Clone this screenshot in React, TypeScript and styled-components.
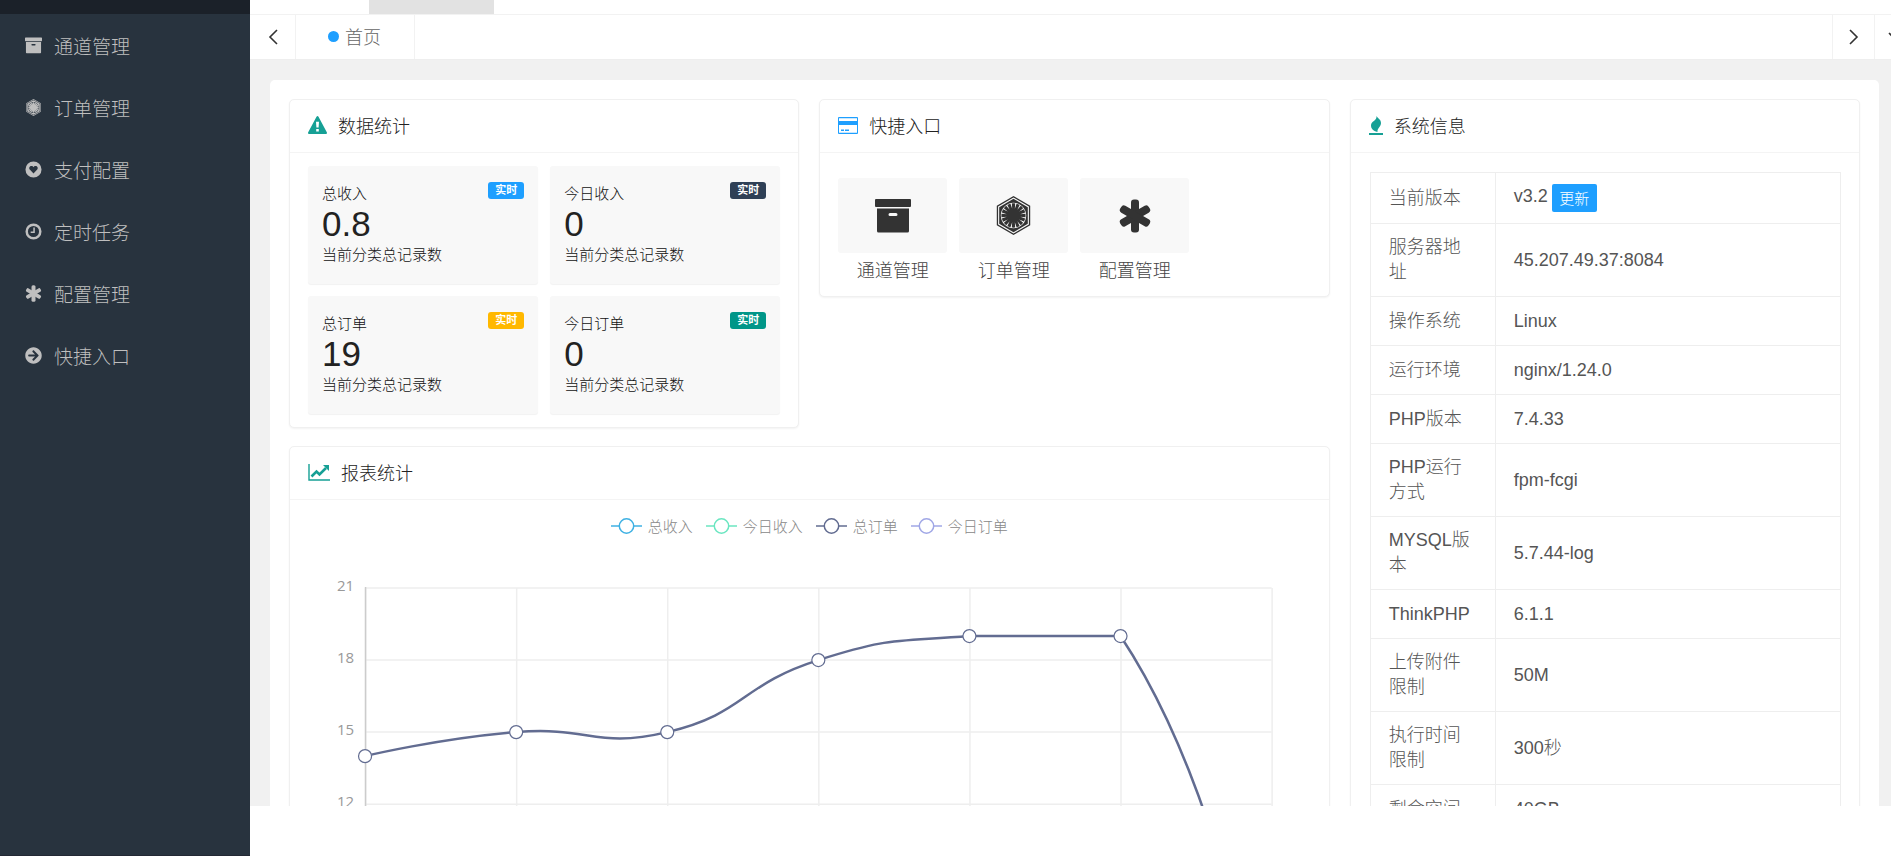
import React from 'react';
import styled, { createGlobalStyle } from 'styled-components';
import { FaArrowCircleRight, FaFirstOrder } from 'react-icons/fa';

const Global = createGlobalStyle`
  * { box-sizing: border-box; }
  body {
    margin: 0;
    background: #fff;
    color: #333;
    font-family: "Liberation Sans", "Noto Sans CJK SC", sans-serif;
    font-size: 18px;
  }
  a { color: inherit; text-decoration: none; }
  button { font: inherit; cursor: pointer; }
`;

const Shell = styled.div`
  display: flex;
  height: 100vh;
  overflow: hidden;
`;

const Sidebar = styled.aside`
  flex: 0 0 250px;
  background: #28333e;
  border-bottom: 1px solid #232834;
`;

const LogoBar = styled.div`
  height: 14px;
  background: #1b2129;
`;

const Menu = styled.nav`
  display: flex;
  flex-direction: column;
`;

const MenuLink = styled.a`
  display: flex;
  align-items: center;
  gap: 12px;
  height: 62px;
  padding-left: 25px;
  color: #bfbfbf;
  font-size: 19px;
  font-weight: 300;
  svg { width: 17px; height: 17px; }
`;

const Main = styled.div`
  flex: 1;
  min-width: 0;
  display: flex;
  flex-direction: column;
  padding-bottom: 50px;
`;

const TopBar = styled.header`
  flex: none;
  height: 15px;
  border-bottom: 1px solid #f2f2f2;
`;

const TopActive = styled.div`
  width: 125px;
  height: 14px;
  margin-left: 119px;
  background: #e2e2e2;
`;

const TabBar = styled.div`
  flex: none;
  display: flex;
  height: 45px;
  border-bottom: 1px solid #eee;
  overflow: hidden;
`;

const TabButton = styled.button<{ $side: 'left' | 'right' }>`
  flex: 0 0 ${(p) => (p.$side === 'left' ? 46 : 42)}px;
  display: flex;
  align-items: center;
  justify-content: center;
  padding: 0;
  background: #fff;
  border: 0 solid #f2f2f2;
  border-width: ${(p) => (p.$side === 'left' ? '0 1px 0 0' : '0 0 0 1px')};
  color: #333;
`;

const MoreButton = styled(TabButton)`
  flex-basis: 17px;
  min-width: 0;
  overflow: hidden;
  justify-content: flex-start;
  padding-left: 13px;
  svg { flex: none; }
`;

const TabCell = styled.div`
  border-right: 1px solid #f2f2f2;
  margin-right: auto;
`;

const Tab = styled.a`
  display: flex;
  align-items: center;
  gap: 6px;
  width: 118px;
  height: 42px;
  padding-left: 32px;
  color: #666;
  font-weight: 300;
`;

const Dot = styled.span`
  width: 11px;
  height: 11px;
  border-radius: 50%;
  background: #1e9fff;
`;

const Content = styled.main`
  flex: 1;
  min-height: 0;
  overflow: auto;
  scrollbar-width: none;
  padding: 20px 12px 0 20px;
  background: #f1f1f1;
`;

const Panel = styled.div`
  display: grid;
  grid-template-columns: repeat(3, minmax(0, 1fr));
  grid-template-rows: auto 1fr;
  gap: 18px 20px;
  align-items: start;
  padding: 19px;
  background: #fff;
  border-radius: 5px;
`;

const Card = styled.section<{ $area?: 'wide' | 'tall' }>`
  background: #fff;
  border: 1px solid #f0f0f0;
  border-radius: 5px;
  box-shadow: 0 1px 2px rgba(0, 0, 0, 0.05);
  ${(p) => p.$area === 'wide' && 'grid-column: 1 / 3; grid-row: 2;'}
  ${(p) => p.$area === 'tall' && 'grid-column: 3; grid-row: 1 / 3;'}
`;

const CardTitle = styled.h2`
  display: flex;
  align-items: center;
  gap: 11px;
  height: 53px;
  margin: 0;
  padding: 0 18px 2px;
  border-bottom: 1px solid #f4f4f4;
  font-size: 18px;
  font-weight: 300;
  color: #222;
`;

const Stats = styled.div`
  display: grid;
  grid-template-columns: 1fr 1fr;
  gap: 12px;
  padding: 13px 18px;
`;

const Stat = styled.div`
  height: 118px;
  padding: 16px 14px 0;
  background: #f8f8f8;
  border-radius: 3px;
  box-shadow: 0 1px 1px #f2f2f2;
  color: #111;
  font-size: 15px;
  font-weight: 300;
`;

const StatHead = styled.div`
  display: flex;
  justify-content: space-between;
  align-items: flex-start;
  line-height: 24px;
`;

const Badge = styled.span<{ $color: string }>`
  width: 36px;
  height: 17px;
  border-radius: 3px;
  background: ${(p) => p.$color};
  color: #fff;
  font-size: 11px;
  font-weight: 700;
  line-height: 16px;
  text-align: center;
`;

const StatValue = styled.div`
  color: #222;
  font-size: 35px;
  line-height: 36px;
`;

const StatNote = styled.div`
  line-height: 26px;
`;

const Shortcuts = styled.div`
  display: flex;
  gap: 12px;
  padding: 25px 18px 7px;
`;

const Shortcut = styled.a`
  width: 109px;
  color: #444;
  font-weight: 300;
  line-height: 36px;
  text-align: center;
`;

const Tile = styled.span`
  display: flex;
  align-items: center;
  justify-content: center;
  height: 75px;
  background: #f8f8f8;
  border-radius: 3px;
  color: #333;
`;

const InfoBody = styled.div`
  padding: 19px 18px 20px 19px;
`;

const InfoTable = styled.table`
  width: 100%;
  table-layout: fixed;
  border-collapse: collapse;
  color: #555;
  line-height: 25px;
  th, td {
    height: 49px;
    padding: 11px 18px;
    border: 1px solid #eee;
    font-weight: 300;
    text-align: left;
  }
  th { width: 125px; }
`;

const Version = styled.div`
  display: flex;
  gap: 4px;
`;

const UpdateButton = styled.button`
  width: 45px;
  height: 28px;
  padding: 0;
  border: 0;
  border-radius: 2px;
  background: #1e9fff;
  color: #fff;
  font-size: 15px;
`;

const Legend = styled.ul`
  display: flex;
  justify-content: center;
  gap: 13px;
  height: 51px;
  margin: 0;
  padding: 0;
  list-style: none;
  color: #888;
  font-size: 15px;
  font-weight: 300;
`;

const LegendItem = styled.li`
  display: flex;
  align-items: center;
  gap: 6px;
`;

const Plot = styled.svg`
  display: block;
  width: 100%;
  height: auto;
  text { fill: #999; font-family: "Open Sans", "Noto Sans", sans-serif; font-size: 15px; }
`;

const ArchiveIcon = ({ w, h }: { w: number; h: number }) => (
  <svg width={w} height={h} viewBox="0 0 36 34" fill="currentColor" aria-hidden>
    <rect width="36" height="8" rx="1" />
    <path
      fillRule="evenodd"
      d="M2 9.500h32v22.500a1.500 1.500 0 0 1-1.500 1.500h-29A1.500 1.500 0 0 1 2 32zM15 14a1.500 1.500 0 0 0 0 3h6a1.500 1.500 0 0 0 0-3z"
    />
  </svg>
);

const AsteriskIcon = ({ size }: { size: number }) => (
  <svg width={size} height={size} viewBox="0 0 34 34" fill="currentColor" aria-hidden>
    {[0, 60, 120].map((angle) => (
      <rect key={angle} x="13" y="0.500" width="8" height="33" rx="3" transform={`rotate(${angle} 17 17)`} />
    ))}
  </svg>
);

const HeartCircleIcon = () => (
  <svg viewBox="0 0 18 18" fill="currentColor" aria-hidden>
    <path
      fillRule="evenodd"
      d="M9 .5a8.500 8.500 0 1 0 0 17 8.500 8.500 0 0 0 0-17zM9 13.300L5.300 9.300C3.600 7.300 5 5.200 6.800 5.200c1 0 1.800.6 2.200 1.300.4-.7 1.200-1.300 2.200-1.300 1.800 0 3.200 2.100 1.500 4.100z"
    />
  </svg>
);

const ClockIcon = () => (
  <svg viewBox="0 0 18 18" fill="none" stroke="currentColor" aria-hidden>
    <circle cx="9" cy="9" r="7.200" strokeWidth="2.600" />
    <path d="M9.600 4.800v5H6" strokeWidth="1.600" />
  </svg>
);

const WarningIcon = () => (
  <svg width="19" height="18" viewBox="0 0 19 18" fill="#16a095" aria-hidden>
    <path
      fillRule="evenodd"
      d="M8.500.8a1.200 1.200 0 0 1 2 0l8.300 15.400a1.200 1.200 0 0 1-1 1.800H1.200a1.200 1.200 0 0 1-1-1.800zM8 5.800l.4 5.700h2.200l.4-5.700zM8.200 13v2.400h2.600V13z"
    />
  </svg>
);

const CardIcon = () => (
  <svg width="20" height="17" viewBox="0 0 20 17" fill="#1e9fff" aria-hidden>
    <path fillRule="evenodd" d="M1 0h18a1 1 0 0 1 1 1v15a1 1 0 0 1-1 1H1a1 1 0 0 1-1-1V1a1 1 0 0 1 1-1zm0 1.300V4h18V1.300zM1 8v7.800h18V8z" />
    <path d="M3 12.500h3V14H3zM7 12.500h4V14H7z" />
  </svg>
);

const ChartIcon = () => (
  <svg width="22" height="18" viewBox="0 0 22 18" fill="none" stroke="#16a095" aria-hidden>
    <path d="M1 1v16h21" strokeWidth="1.400" />
    <path d="M3.500 13.500l5-5 3 3 6.500-6.500" strokeWidth="2.600" />
    <path d="M15 2h6v6z" fill="#16a095" stroke="none" />
  </svg>
);

const FlameIcon = () => (
  <svg width="14" height="19" viewBox="0 0 14 19" fill="#16a095" aria-hidden>
    <path d="M7.500 0C8.500 2.500 12 3 12 7c0 4-4 5-3.500 9C4 15 2 12.500 2 9.500 2 5 8 5 7.500 0z" />
    <path d="M0 17h14v2H0z" />
  </svg>
);

const Chevron = ({ d, w = 10, h = 16 }: { d: string; w?: number; h?: number }) => (
  <svg width={w} height={h} viewBox={`0 0 ${w} ${h}`} fill="none" stroke="currentColor" strokeWidth="1.600" aria-hidden>
    <path d={d} />
  </svg>
);

const menu = [
  { label: '通道管理', icon: <ArchiveIcon w={17} h={17} /> },
  { label: '订单管理', icon: <FaFirstOrder /> },
  { label: '支付配置', icon: <HeartCircleIcon /> },
  { label: '定时任务', icon: <ClockIcon /> },
  { label: '配置管理', icon: <AsteriskIcon size={17} /> },
  { label: '快捷入口', icon: <FaArrowCircleRight /> },
];

const stats = [
  { label: '总收入', value: '0.8', color: '#1e9fff' },
  { label: '今日收入', value: '0', color: '#2f4056' },
  { label: '总订单', value: '19', color: '#ffb800' },
  { label: '今日订单', value: '0', color: '#009688' },
];

const shortcuts = [
  { label: '通道管理', icon: <ArchiveIcon w={36} h={34} /> },
  { label: '订单管理', icon: <FaFirstOrder size={39} /> },
  { label: '配置管理', icon: <AsteriskIcon size={34} /> },
];

const info = [
  ['服务器地址', '45.207.49.37:8084'],
  ['操作系统', 'Linux'],
  ['运行环境', 'nginx/1.24.0'],
  ['PHP版本', '7.4.33'],
  ['PHP运行方式', 'fpm-fcgi'],
  ['MYSQL版本', '5.7.44-log'],
  ['ThinkPHP', '6.1.1'],
  ['上传附件限制', '50M'],
  ['执行时间限制', '300秒'],
  ['剩余空间', '40GB'],
];

const series = [
  { name: '总收入', color: '#3fb1e3' },
  { name: '今日收入', color: '#6be6c1' },
  { name: '总订单', color: '#626c91' },
  { name: '今日订单', color: '#a0a7e6' },
];

const LEFT = 75;
const TOP = 37;
const STEP_X = 151;
const UNIT_Y = 24;
const orders = [14, 15, 15, 18, 19, 19, 0];
const ticks = [21, 18, 15, 12, 9, 6, 3, 0];
const yOf = (v: number) => TOP + (21 - v) * UNIT_Y;
const points = orders.map((v, i) => ({ x: LEFT + i * STEP_X, y: yOf(v) }));

function smoothPath(pts: { x: number; y: number }[]) {
  const minY = Math.min(...pts.map((p) => p.y));
  const maxY = Math.max(...pts.map((p) => p.y));
  const clamp = (y: number) => Math.max(minY, Math.min(maxY, y));
  const controls = pts.map((p, i) => {
    const a = pts[i - 1];
    const b = pts[i + 1];
    if (!a || !b) return { before: p, after: p };
    const da = Math.hypot(p.x - a.x, p.y - a.y);
    const db = Math.hypot(p.x - b.x, p.y - b.y);
    const k = 0.5 / (da + db);
    return {
      before: { x: p.x - (b.x - a.x) * k * da, y: clamp(p.y - (b.y - a.y) * k * da) },
      after: { x: p.x + (b.x - a.x) * k * db, y: clamp(p.y + (b.y - a.y) * k * db) },
    };
  });
  return pts
    .map((p, i) => {
      if (i === 0) return `M${p.x} ${p.y}`;
      const c1 = controls[i - 1].after;
      const c2 = controls[i].before;
      return `C${c1.x} ${c1.y} ${c2.x} ${c2.y} ${p.x} ${p.y}`;
    })
    .join('');
}

const OrderChart = () => {
  const right = LEFT + STEP_X * 6;
  return (
    <Plot viewBox="0 0 1038 580" role="img" aria-label="报表统计">
      {ticks.map((t) => (
        <g key={t}>
          <path d={`M${LEFT} ${yOf(t)}H${right}`} stroke="#eee" strokeWidth="1.500" />
          <text x={LEFT - 11} y={yOf(t) + 3} textAnchor="end">{t}</text>
        </g>
      ))}
      {points.map((p, i) => (
        <path key={i} d={`M${p.x + 0.5} ${TOP}V${yOf(0)}`} stroke="#eee" strokeWidth="1.500" />
      ))}
      <path d={`M${LEFT + 0.5} ${TOP - 1}V${yOf(0)}`} stroke="#ccc" strokeWidth="1.500" />
      <path d={smoothPath(points)} fill="none" stroke="#626c91" strokeWidth="2.500" />
      {points.map((p, i) => (
        <circle key={i} cx={p.x} cy={p.y} r="6.500" fill="#fff" stroke="#626c91" strokeWidth="1.200" />
      ))}
    </Plot>
  );
};

export default function App() {
  return (
    <>
      <Global />
      <Shell>
        <Sidebar>
          <LogoBar />
          <Menu>
            {menu.map((m) => (
              <MenuLink href="#" key={m.label}>
                {m.icon}
                {m.label}
              </MenuLink>
            ))}
          </Menu>
        </Sidebar>
        <Main>
          <TopBar>
            <TopActive />
          </TopBar>
          <TabBar>
            <TabButton $side="left" aria-label="向左">
              <Chevron d="M9 1L2 8l7 7" />
            </TabButton>
            <TabCell>
              <Tab href="#">
                <Dot />
                首页
              </Tab>
            </TabCell>
            <TabButton $side="right" aria-label="向右">
              <Chevron d="M1 1l7 7-7 7" />
            </TabButton>
            <MoreButton $side="right" aria-label="更多">
              <Chevron d="M1 1l7 7 7-7" w={16} h={10} />
            </MoreButton>
          </TabBar>
          <Content>
            <Panel>
              <Card>
                <CardTitle>
                  <WarningIcon />
                  数据统计
                </CardTitle>
                <Stats>
                  {stats.map((s) => (
                    <Stat key={s.label}>
                      <StatHead>
                        {s.label}
                        <Badge $color={s.color}>实时</Badge>
                      </StatHead>
                      <StatValue>{s.value}</StatValue>
                      <StatNote>当前分类总记录数</StatNote>
                    </Stat>
                  ))}
                </Stats>
              </Card>
              <Card>
                <CardTitle>
                  <CardIcon />
                  快捷入口
                </CardTitle>
                <Shortcuts>
                  {shortcuts.map((s) => (
                    <Shortcut href="#" key={s.label}>
                      <Tile>{s.icon}</Tile>
                      {s.label}
                    </Shortcut>
                  ))}
                </Shortcuts>
              </Card>
              <Card $area="wide">
                <CardTitle>
                  <ChartIcon />
                  报表统计
                </CardTitle>
                <Legend>
                  {series.map((s) => (
                    <LegendItem key={s.name}>
                      <svg width="31" height="18" fill="#fff" stroke={s.color} strokeWidth="1.500" aria-hidden>
                        <path d="M0 9h31" />
                        <circle cx="15.500" cy="9" r="7.200" />
                      </svg>
                      {s.name}
                    </LegendItem>
                  ))}
                </Legend>
                <OrderChart />
              </Card>
              <Card $area="tall">
                <CardTitle>
                  <FlameIcon />
                  系统信息
                </CardTitle>
                <InfoBody>
                  <InfoTable>
                    <tbody>
                      <tr>
                        <th scope="row">当前版本</th>
                        <td>
                          <Version>
                            v3.2
                            <UpdateButton>更新</UpdateButton>
                          </Version>
                        </td>
                      </tr>
                      {info.map(([k, v]) => (
                        <tr key={k}>
                          <th scope="row">{k}</th>
                          <td>{v}</td>
                        </tr>
                      ))}
                    </tbody>
                  </InfoTable>
                </InfoBody>
              </Card>
            </Panel>
          </Content>
        </Main>
      </Shell>
    </>
  );
}
